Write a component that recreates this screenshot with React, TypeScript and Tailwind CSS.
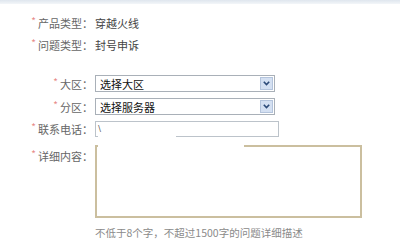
import React from 'react';

const font = { fontFamily: '"Microsoft YaHei", "Noto Sans CJK SC", "Noto Sans", sans-serif' };

function Label({ text }: { text: string }) {
  return (
    <div className="flex w-[93px] shrink-0 items-start justify-end text-[#666]">
      <span className="mr-[2px] text-[10px] leading-[12px] text-[#e88a8a]">*</span>
      <span>{text}：</span>
    </div>
  );
}

function Select({ value }: { value: string }) {
  return (
    <div className="flex h-[17px] w-[180px] items-center justify-between border border-[#a9b0b8] bg-white pl-[4px] pr-[1px]">
      <span className="text-[11px] text-[#111]">{value}</span>
      <span className="flex h-[13px] w-[13px] items-center justify-center border border-[#b4c4dc] bg-[#d4e0f2]">
        <svg width="7" height="5" viewBox="0 0 7 5">
          <path d="M0.8 0.8 L3.5 3.6 L6.2 0.8" fill="none" stroke="#2c4a78" strokeWidth="1.6" />
        </svg>
      </span>
    </div>
  );
}

export default function App() {
  return (
    <div className="relative h-[249px] w-[400px] overflow-hidden bg-white text-[11px] leading-4" style={font}>
      <div className="h-[4px] bg-gradient-to-b from-[#dfe6ee] to-[#f3f6f9]" />

      <div className="mt-[11px] flex h-4 items-center">
        <Label text="产品类型" />
        <span className="ml-[2px] text-[#444]">穿越火线</span>
      </div>
      <div className="mt-[6px] flex h-4 items-center">
        <Label text="问题类型" />
        <span className="ml-[2px] text-[#444]">封号申诉</span>
      </div>

      <div className="mt-[22px] flex items-center">
        <Label text="大区" />
        <div className="ml-[2px]">
          <Select value="选择大区" />
        </div>
      </div>
      <div className="mt-[6px] flex items-center">
        <Label text="分区" />
        <div className="ml-[2px]">
          <Select value="选择服务器" />
        </div>
      </div>
      <div className="mt-[6px] flex items-center">
        <Label text="联系电话" />
        <div className="ml-[2px] flex h-[16px] w-[184px] items-center border border-[#bcc3ca] bg-white pl-[2px] text-[10px] text-[#555]">
          \
        </div>
      </div>

      <div className="mt-[8px] flex items-start">
        <div className="pt-[3px]">
          <Label text="详细内容" />
        </div>
        <div className="ml-[2px] h-[73px] w-[267px] border-2 border-[#cbbf9f] bg-white" />
      </div>

      <div className="mt-[7px] pl-[95px] text-[10.5px] text-[#8a8a8a]">不低于8个字，不超过1500字的问题详细描述</div>

      <div className="absolute left-[98px] top-[132px] h-[7px] w-[78px] bg-white" />
      <div className="absolute left-[98px] top-[139px] h-[9px] w-[146px] bg-white" />
    </div>
  );
}
